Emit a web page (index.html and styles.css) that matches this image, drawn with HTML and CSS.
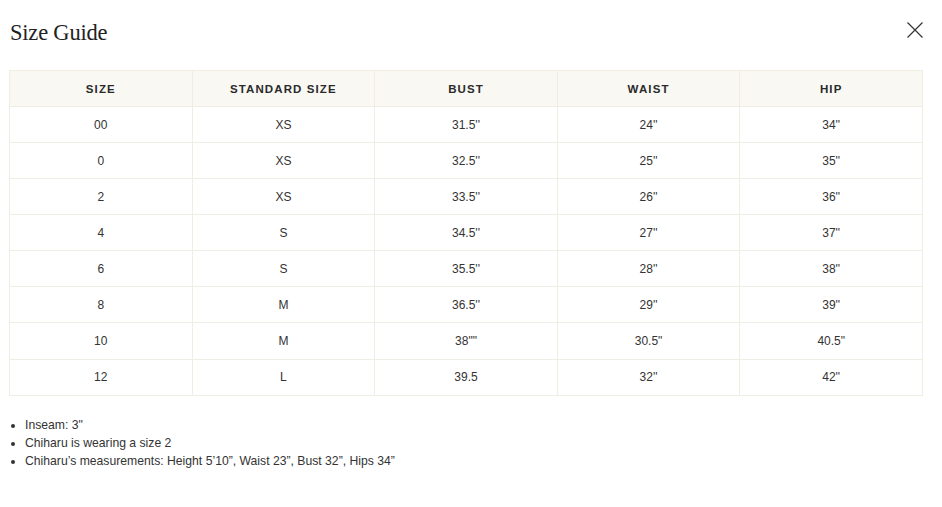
FILE: index.html
```html
<!DOCTYPE html>
<html>
<head>
<meta charset="utf-8">
<link rel="stylesheet" href="styles.css">
</head>
<body>
<div class="modal">
  <div class="head">
    <h1 class="title">Size Guide</h1>
    <button class="close" aria-label="Close">
      <svg width="16" height="16" viewBox="0 0 16 16"><path d="M0.5 0.5L15.5 15.5M15.5 0.5L0.5 15.5" stroke="#333" stroke-width="1.2" fill="none"/></svg>
    </button>
  </div>
  <table class="grid">
    <thead>
      <tr><th>SIZE</th><th>STANDARD SIZE</th><th>BUST</th><th>WAIST</th><th>HIP</th></tr>
    </thead>
    <tbody>
      <tr><td>00</td><td>XS</td><td>31.5''</td><td>24''</td><td>34''</td></tr>
      <tr><td>0</td><td>XS</td><td>32.5''</td><td>25''</td><td>35''</td></tr>
      <tr><td>2</td><td>XS</td><td>33.5''</td><td>26''</td><td>36''</td></tr>
      <tr><td>4</td><td>S</td><td>34.5''</td><td>27''</td><td>37''</td></tr>
      <tr><td>6</td><td>S</td><td>35.5''</td><td>28''</td><td>38''</td></tr>
      <tr><td>8</td><td>M</td><td>36.5''</td><td>29''</td><td>39''</td></tr>
      <tr><td>10</td><td>M</td><td>38""</td><td>30.5"</td><td>40.5"</td></tr>
      <tr><td>12</td><td>L</td><td>39.5</td><td>32''</td><td>42''</td></tr>
    </tbody>
  </table>
  <ul class="notes">
    <li>Inseam: 3"</li>
    <li>Chiharu is wearing a size 2</li>
    <li>Chiharu’s measurements: Height 5’10”, Waist 23”, Bust 32”, Hips 34”</li>
  </ul>
</div>
</body>
</html>
```
FILE: styles.css
```css
html, body {
  margin: 0;
  padding: 0;
  background: #fff;
}
body {
  font-family: "Liberation Sans", Arial, sans-serif;
  color: #333;
}
.modal {
  padding: 0 20px 0 9px;
}
.head {
  display: flex;
  justify-content: space-between;
  align-items: flex-start;
  height: 70px;
}
.title {
  margin: 20px 0 0 1px;
  font-family: "Liberation Serif", "Times New Roman", serif;
  font-weight: normal;
  font-size: 22.5px;
  color: #222;
  letter-spacing: -0.2px;
}
.close {
  margin: 22px -1px 0 0;
  padding: 0;
  border: 0;
  background: none;
  width: 16px;
  height: 16px;
  cursor: pointer;
}
.close svg {
  display: block;
}
.grid {
  width: 914px;
  border-collapse: collapse;
  table-layout: fixed;
}
.grid th, .grid td {
  border: 1px solid #f0ede3;
  height: 35px;
  padding: 0;
  text-align: center;
  font-size: 12px;
}
.grid tbody tr:nth-child(n+7) td {
  height: 35.5px;
}
.grid th {
  background: #f9f8f3;
  font-weight: bold;
  letter-spacing: 1.1px;
  color: #2a2a2a;
  font-size: 11.5px;
}
.grid td {
  color: #333;
}
.notes {
  margin: 20px 0 0 0;
  padding: 0 0 0 16px;
  font-size: 12.2px;
  line-height: 18px;
  color: #333;
}
```
